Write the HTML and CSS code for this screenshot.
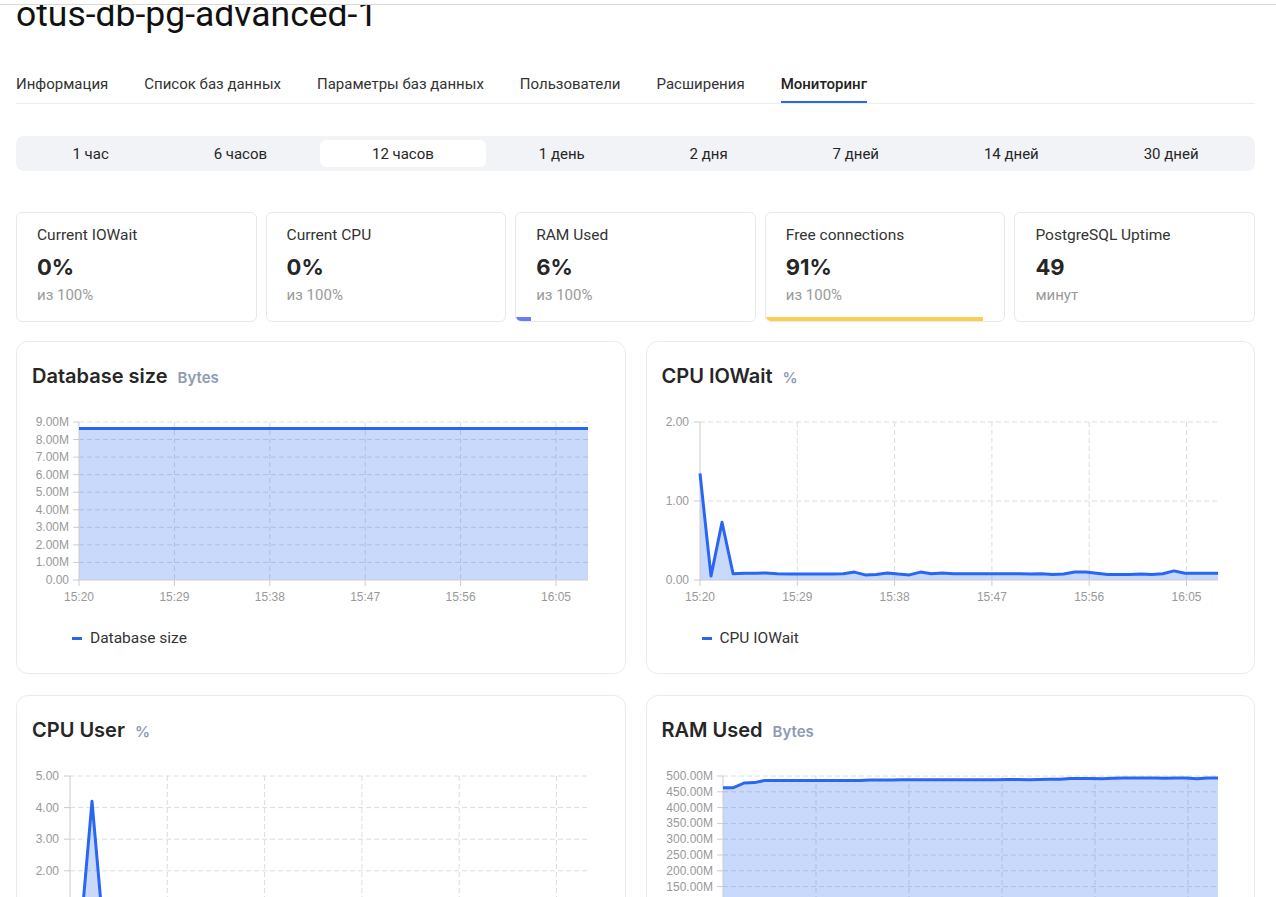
FILE: index.html
```html
<!DOCTYPE html>
<html lang="ru">
<head>
<meta charset="utf-8">
<title>otus-db-pg-advanced-1 — Мониторинг</title>
<link rel="stylesheet" href="styles.css">
</head>
<body>
<div class="topbar"></div>
<main class="page">
  <div class="title-clip"><h1 class="title">otus-db-pg-advanced-1</h1></div>

  <nav class="tabs">
    <span class="tab">Информация</span>
    <span class="tab">Список баз данных</span>
    <span class="tab">Параметры баз данных</span>
    <span class="tab">Пользователи</span>
    <span class="tab">Расширения</span>
    <span class="tab active">Мониторинг</span>
  </nav>

  <div class="seg">
    <span class="seg-item">1 час</span>
    <span class="seg-item">6 часов</span>
    <span class="seg-item active">12 часов</span>
    <span class="seg-item">1 день</span>
    <span class="seg-item">2 дня</span>
    <span class="seg-item">7 дней</span>
    <span class="seg-item">14 дней</span>
    <span class="seg-item">30 дней</span>
  </div>

  <section class="stats">
    <div class="stat">
      <div class="stat-body">
        <div class="stat-label">Current IOWait</div>
        <div class="stat-value">0%</div>
        <div class="stat-sub">из 100%</div>
      </div>
      <div class="stat-track"></div>
    </div>
    <div class="stat">
      <div class="stat-body">
        <div class="stat-label">Current CPU</div>
        <div class="stat-value">0%</div>
        <div class="stat-sub">из 100%</div>
      </div>
      <div class="stat-track"></div>
    </div>
    <div class="stat">
      <div class="stat-body">
        <div class="stat-label">RAM Used</div>
        <div class="stat-value">6%</div>
        <div class="stat-sub">из 100%</div>
      </div>
      <div class="stat-track"><div class="stat-bar bar-blue" style="width:6%"></div></div>
    </div>
    <div class="stat">
      <div class="stat-body">
        <div class="stat-label">Free connections</div>
        <div class="stat-value">91%</div>
        <div class="stat-sub">из 100%</div>
      </div>
      <div class="stat-track"><div class="stat-bar bar-yellow" style="width:91%"></div></div>
    </div>
    <div class="stat">
      <div class="stat-body">
        <div class="stat-label">PostgreSQL Uptime</div>
        <div class="stat-value">49</div>
        <div class="stat-sub">минут</div>
      </div>
      <div class="stat-track"></div>
    </div>
  </section>

  <section class="charts">
    <!-- Database size -->
    <div class="chart-card">
      <div class="chart-head"><span class="chart-title">Database size</span><span class="chart-unit">Bytes</span></div>
      <svg class="chart" width="577" height="210" viewBox="0 0 577 210">
        <g class="grid">
          <line x1="47" y1="21" x2="556" y2="21"/>
          <line x1="47" y1="38.56" x2="556" y2="38.56"/>
          <line x1="47" y1="56.11" x2="556" y2="56.11"/>
          <line x1="47" y1="73.67" x2="556" y2="73.67"/>
          <line x1="47" y1="91.22" x2="556" y2="91.22"/>
          <line x1="47" y1="108.78" x2="556" y2="108.78"/>
          <line x1="47" y1="126.33" x2="556" y2="126.33"/>
          <line x1="47" y1="143.89" x2="556" y2="143.89"/>
          <line x1="47" y1="161.44" x2="556" y2="161.44"/>
          <line x1="142.4" y1="21" x2="142.4" y2="179"/>
          <line x1="237.8" y1="21" x2="237.8" y2="179"/>
          <line x1="333.2" y1="21" x2="333.2" y2="179"/>
          <line x1="428.6" y1="21" x2="428.6" y2="179"/>
          <line x1="524" y1="21" x2="524" y2="179"/>
        </g>
        <path class="area" d="M47,27.4 L556,27.4 L556,179 L47,179 Z"/>
        <g class="axis">
          <line x1="47" y1="21" x2="47" y2="179"/>
          <line x1="47" y1="179" x2="556" y2="179"/>
          <line x1="41" y1="21" x2="47" y2="21"/><line x1="41" y1="38.56" x2="47" y2="38.56"/><line x1="41" y1="56.11" x2="47" y2="56.11"/><line x1="41" y1="73.67" x2="47" y2="73.67"/><line x1="41" y1="91.22" x2="47" y2="91.22"/><line x1="41" y1="108.78" x2="47" y2="108.78"/><line x1="41" y1="126.33" x2="47" y2="126.33"/><line x1="41" y1="143.89" x2="47" y2="143.89"/><line x1="41" y1="161.44" x2="47" y2="161.44"/><line x1="41" y1="179" x2="47" y2="179"/>
          <line x1="47" y1="179" x2="47" y2="185"/><line x1="142.4" y1="179" x2="142.4" y2="185"/><line x1="237.8" y1="179" x2="237.8" y2="185"/><line x1="333.2" y1="179" x2="333.2" y2="185"/><line x1="428.6" y1="179" x2="428.6" y2="185"/><line x1="524" y1="179" x2="524" y2="185"/>
        </g>
        <path class="line" d="M47,27.4 L556,27.4"/>
        <g class="ylab">
          <text x="37" y="25">9.00M</text><text x="37" y="42.6">8.00M</text><text x="37" y="60.1">7.00M</text><text x="37" y="77.7">6.00M</text><text x="37" y="95.2">5.00M</text><text x="37" y="112.8">4.00M</text><text x="37" y="130.3">3.00M</text><text x="37" y="147.9">2.00M</text><text x="37" y="165.4">1.00M</text><text x="37" y="183">0.00</text>
        </g>
        <g class="xlab">
          <text x="47" y="200">15:20</text><text x="142.4" y="200">15:29</text><text x="237.8" y="200">15:38</text><text x="333.2" y="200">15:47</text><text x="428.6" y="200">15:56</text><text x="524" y="200">16:05</text>
        </g>
      </svg>
      <div class="legend"><span class="legend-mark"></span>Database size</div>
    </div>

    <!-- CPU IOWait -->
    <div class="chart-card">
      <div class="chart-head"><span class="chart-title">CPU IOWait</span><span class="chart-unit">%</span></div>
      <svg class="chart" width="577" height="210" viewBox="0 0 577 210">
        <g class="grid">
          <line x1="38" y1="21" x2="556" y2="21"/>
          <line x1="38" y1="100" x2="556" y2="100"/>
          <line x1="135.3" y1="21" x2="135.3" y2="179"/>
          <line x1="232.6" y1="21" x2="232.6" y2="179"/>
          <line x1="329.9" y1="21" x2="329.9" y2="179"/>
          <line x1="427.2" y1="21" x2="427.2" y2="179"/>
          <line x1="524.5" y1="21" x2="524.5" y2="179"/>
        </g>
        <path class="area" d="M38,72.4 L49,175.1 L60,121.3 L71.1,172.7 L82.1,172.3 L93.1,172.3 L104.1,171.9 L115.1,172.7 L126.2,173.1 L137.2,173.1 L148.2,173.1 L159.2,173.1 L170.2,173.1 L181.3,172.7 L192.3,171.1 L203.3,173.9 L214.3,173.5 L225.3,171.9 L236.4,173.1 L247.4,173.9 L258.4,171.1 L269.4,172.7 L280.4,171.9 L291.5,172.7 L302.5,172.7 L313.5,172.7 L324.5,172.7 L335.5,172.7 L346.6,172.7 L357.6,172.7 L368.6,173.1 L379.6,172.7 L390.6,173.5 L401.7,173.1 L412.7,171.1 L423.7,171.1 L434.7,172.3 L445.7,173.5 L456.8,173.5 L467.8,173.5 L478.8,173.1 L489.8,173.5 L500.8,172.7 L511.9,169.9 L522.9,172.3 L533.9,172.3 L544.9,172.3 L556,172.3 L556,179 L38,179 Z"/>
        <g class="axis">
          <line x1="38" y1="21" x2="38" y2="179"/>
          <line x1="38" y1="179" x2="556" y2="179"/>
          <line x1="32" y1="21" x2="38" y2="21"/><line x1="32" y1="100" x2="38" y2="100"/><line x1="32" y1="179" x2="38" y2="179"/>
          <line x1="38" y1="179" x2="38" y2="185"/><line x1="135.3" y1="179" x2="135.3" y2="185"/><line x1="232.6" y1="179" x2="232.6" y2="185"/><line x1="329.9" y1="179" x2="329.9" y2="185"/><line x1="427.2" y1="179" x2="427.2" y2="185"/><line x1="524.5" y1="179" x2="524.5" y2="185"/>
        </g>
        <path class="line" d="M38,72.4 L49,175.1 L60,121.3 L71.1,172.7 L82.1,172.3 L93.1,172.3 L104.1,171.9 L115.1,172.7 L126.2,173.1 L137.2,173.1 L148.2,173.1 L159.2,173.1 L170.2,173.1 L181.3,172.7 L192.3,171.1 L203.3,173.9 L214.3,173.5 L225.3,171.9 L236.4,173.1 L247.4,173.9 L258.4,171.1 L269.4,172.7 L280.4,171.9 L291.5,172.7 L302.5,172.7 L313.5,172.7 L324.5,172.7 L335.5,172.7 L346.6,172.7 L357.6,172.7 L368.6,173.1 L379.6,172.7 L390.6,173.5 L401.7,173.1 L412.7,171.1 L423.7,171.1 L434.7,172.3 L445.7,173.5 L456.8,173.5 L467.8,173.5 L478.8,173.1 L489.8,173.5 L500.8,172.7 L511.9,169.9 L522.9,172.3 L533.9,172.3 L544.9,172.3 L556,172.3"/>
        <g class="ylab">
          <text x="27" y="25">2.00</text><text x="27" y="104">1.00</text><text x="27" y="183">0.00</text>
        </g>
        <g class="xlab">
          <text x="38" y="200">15:20</text><text x="135.3" y="200">15:29</text><text x="232.6" y="200">15:38</text><text x="329.9" y="200">15:47</text><text x="427.2" y="200">15:56</text><text x="524.5" y="200">16:05</text>
        </g>
      </svg>
      <div class="legend"><span class="legend-mark"></span>CPU IOWait</div>
    </div>

    <!-- CPU User -->
    <div class="chart-card">
      <div class="chart-head"><span class="chart-title">CPU User</span><span class="chart-unit">%</span></div>
      <svg class="chart" width="577" height="210" viewBox="0 0 577 210">
        <g class="grid">
          <line x1="38" y1="21" x2="556" y2="21"/>
          <line x1="38" y1="52.6" x2="556" y2="52.6"/>
          <line x1="38" y1="84.2" x2="556" y2="84.2"/>
          <line x1="38" y1="115.8" x2="556" y2="115.8"/>
          <line x1="38" y1="147.4" x2="556" y2="147.4"/>
          <line x1="135.3" y1="21" x2="135.3" y2="179"/>
          <line x1="232.6" y1="21" x2="232.6" y2="179"/>
          <line x1="329.9" y1="21" x2="329.9" y2="179"/>
          <line x1="427.2" y1="21" x2="427.2" y2="179"/>
          <line x1="524.5" y1="21" x2="524.5" y2="179"/>
        </g>
        <path class="area" d="M38,163.2 L49,172.7 L60,46.3 L71.1,172.7 L82.1,169.5 L556,169.5 L556,179 L38,179 Z"/>
        <g class="axis">
          <line x1="38" y1="21" x2="38" y2="179"/>
          <line x1="38" y1="179" x2="556" y2="179"/>
          <line x1="32" y1="21" x2="38" y2="21"/><line x1="32" y1="52.6" x2="38" y2="52.6"/><line x1="32" y1="84.2" x2="38" y2="84.2"/><line x1="32" y1="115.8" x2="38" y2="115.8"/><line x1="32" y1="147.4" x2="38" y2="147.4"/><line x1="32" y1="179" x2="38" y2="179"/>
        </g>
        <path class="line" d="M38,163.2 L49,172.7 L60,46.3 L71.1,172.7 L82.1,169.5 L556,169.5"/>
        <g class="ylab">
          <text x="27" y="25">5.00</text><text x="27" y="56.6">4.00</text><text x="27" y="88.2">3.00</text><text x="27" y="119.8">2.00</text><text x="27" y="151.4">1.00</text><text x="27" y="183">0.00</text>
        </g>
      </svg>
      <div class="legend"><span class="legend-mark"></span>CPU User</div>
    </div>

    <!-- RAM Used -->
    <div class="chart-card">
      <div class="chart-head"><span class="chart-title">RAM Used</span><span class="chart-unit">Bytes</span></div>
      <svg class="chart" width="577" height="210" viewBox="0 0 577 210">
        <g class="grid">
          <line x1="61" y1="21" x2="556" y2="21"/>
          <line x1="61" y1="36.8" x2="556" y2="36.8"/>
          <line x1="61" y1="52.6" x2="556" y2="52.6"/>
          <line x1="61" y1="68.4" x2="556" y2="68.4"/>
          <line x1="61" y1="84.2" x2="556" y2="84.2"/>
          <line x1="61" y1="100" x2="556" y2="100"/>
          <line x1="61" y1="115.8" x2="556" y2="115.8"/>
          <line x1="61" y1="131.6" x2="556" y2="131.6"/>
          <line x1="61" y1="147.4" x2="556" y2="147.4"/>
          <line x1="61" y1="163.2" x2="556" y2="163.2"/>
          <line x1="154" y1="21" x2="154" y2="179"/>
          <line x1="247" y1="21" x2="247" y2="179"/>
          <line x1="340" y1="21" x2="340" y2="179"/>
          <line x1="433" y1="21" x2="433" y2="179"/>
          <line x1="526" y1="21" x2="526" y2="179"/>
        </g>
        <path class="area" d="M61,32.7 L71.5,32.7 L82.1,28 L92.6,27.6 L103.1,25.4 L113.7,25.4 L124.2,25.4 L134.7,25.4 L145.2,25.4 L155.8,25.4 L166.3,25.4 L176.8,25.6 L187.4,25.6 L197.9,25.4 L208.4,25.1 L219,25.1 L229.5,25.1 L240,24.8 L250.5,24.8 L261.1,24.8 L271.6,24.8 L282.1,24.8 L292.7,24.8 L303.2,24.8 L313.7,24.8 L324.3,24.8 L334.8,24.8 L345.3,24.5 L355.8,24.5 L366.4,24.8 L376.9,24.5 L387.4,24.2 L398,24.2 L408.5,23.5 L419,23.5 L429.6,23.5 L440.1,23.8 L450.6,23.2 L461.1,22.9 L471.7,22.9 L482.2,22.9 L492.7,22.9 L503.3,23.2 L513.8,22.9 L524.3,22.9 L534.9,23.8 L545.4,22.9 L556,22.9 L556,179 L61,179 Z"/>
        <g class="axis">
          <line x1="61" y1="21" x2="61" y2="179"/>
          <line x1="55" y1="21" x2="61" y2="21"/><line x1="55" y1="36.8" x2="61" y2="36.8"/><line x1="55" y1="52.6" x2="61" y2="52.6"/><line x1="55" y1="68.4" x2="61" y2="68.4"/><line x1="55" y1="84.2" x2="61" y2="84.2"/><line x1="55" y1="100" x2="61" y2="100"/><line x1="55" y1="115.8" x2="61" y2="115.8"/><line x1="55" y1="131.6" x2="61" y2="131.6"/><line x1="55" y1="147.4" x2="61" y2="147.4"/><line x1="55" y1="163.2" x2="61" y2="163.2"/><line x1="55" y1="179" x2="61" y2="179"/>
          <line x1="61" y1="179" x2="556" y2="179"/>
        </g>
        <path class="line" d="M61,32.7 L71.5,32.7 L82.1,28 L92.6,27.6 L103.1,25.4 L113.7,25.4 L124.2,25.4 L134.7,25.4 L145.2,25.4 L155.8,25.4 L166.3,25.4 L176.8,25.6 L187.4,25.6 L197.9,25.4 L208.4,25.1 L219,25.1 L229.5,25.1 L240,24.8 L250.5,24.8 L261.1,24.8 L271.6,24.8 L282.1,24.8 L292.7,24.8 L303.2,24.8 L313.7,24.8 L324.3,24.8 L334.8,24.8 L345.3,24.5 L355.8,24.5 L366.4,24.8 L376.9,24.5 L387.4,24.2 L398,24.2 L408.5,23.5 L419,23.5 L429.6,23.5 L440.1,23.8 L450.6,23.2 L461.1,22.9 L471.7,22.9 L482.2,22.9 L492.7,22.9 L503.3,23.2 L513.8,22.9 L524.3,22.9 L534.9,23.8 L545.4,22.9 L556,22.9"/>
        <g class="ylab">
          <text x="51" y="25">500.00M</text><text x="51" y="40.8">450.00M</text><text x="51" y="56.6">400.00M</text><text x="51" y="72.4">350.00M</text><text x="51" y="88.2">300.00M</text><text x="51" y="104">250.00M</text><text x="51" y="119.8">200.00M</text><text x="51" y="135.6">150.00M</text><text x="51" y="151.4">100.00M</text><text x="51" y="167.2">50.00M</text><text x="51" y="183">0.00</text>
        </g>
      </svg>
      <div class="legend"><span class="legend-mark"></span>RAM Used</div>
    </div>
  </section>
</main>
</body>
</html>
```

FILE: styles.css
```css
* { box-sizing: border-box; }

html, body {
  margin: 0;
  background: #ffffff;
  color: #262626;
  font-family: Inter, "Noto Sans", sans-serif;
}

.topbar {
  height: 5px;
  border-bottom: 1px solid #d9d9d9;
  background: #ffffff;
}

.page {
  padding: 0 21px 0 16px;
}

.title-clip {
  height: 29px;
  overflow: hidden;
}

.title {
  margin: -11px 0 0;
  font-family: Roboto, "Liberation Sans", sans-serif;
  font-weight: 400;
  font-size: 35.5px;
  line-height: 40px;
  color: #111111;
  white-space: nowrap;
}

.tabs {
  margin-top: 40px;
  display: flex;
  gap: 36px;
  border-bottom: 1px solid #eceef1;
}

.tab {
  font-family: Roboto, "Liberation Sans", sans-serif;
  font-size: 15px;
  line-height: 20px;
  color: #333;
  padding-bottom: 7px;
  border-bottom: 2px solid transparent;
}

.tab.active {
  font-weight: 500;
  color: #222;
  border-bottom-color: #2867f5;
}

.seg {
  margin-top: 32px;
  display: flex;
  padding: 4px;
  background: #f2f3f6;
  border-radius: 8px;
}

.seg-item {
  flex: 1 1 auto;
  text-align: center;
  font-family: Roboto, "Liberation Sans", sans-serif;
  font-size: 15px;
  line-height: 26px;
  padding-top: 1px;
  color: #262626;
  border-radius: 6px;
}

.seg-item.active {
  background: #ffffff;
}

.stats {
  margin-top: 41px;
  display: grid;
  grid-template-columns: repeat(5, 1fr);
  gap: 9px;
}

.stat {
  height: 110px;
  border: 1px solid #e6e8ec;
  border-radius: 6px;
  overflow: hidden;
  display: flex;
  flex-direction: column;
}

.stat-body {
  flex: 1;
  padding: 12px 20px 0;
}

.stat-label {
  font-family: Roboto, "Liberation Sans", sans-serif;
  font-size: 15.5px;
  line-height: 20px;
  color: #333;
}

.stat-value {
  margin-top: 8px;
  font-size: 22px;
  font-weight: 700;
  line-height: 28px;
  color: #262626;
}

.stat-sub {
  margin-top: 4px;
  font-family: Roboto, "Liberation Sans", sans-serif;
  font-size: 15px;
  line-height: 20px;
  color: #9a9a9a;
}

.stat-track {
  height: 4px;
}

.stat-bar {
  height: 4px;
}

.bar-blue { background: #6b7cf2; }
.bar-yellow { background: #fbcd50; }

.charts {
  margin-top: 19px;
  display: grid;
  grid-template-columns: 1fr 1fr;
  gap: 21px 20px;
}

.chart-card {
  border: 1px solid #e8ecf2;
  border-radius: 12px;
  padding: 21px 15px 25px;
}

.chart-head {
  display: flex;
  align-items: baseline;
  gap: 10px;
  line-height: 26px;
}

.chart-title {
  font-size: 20px;
  font-weight: 600;
  color: #262626;
}

.chart-unit {
  font-size: 15px;
  font-weight: 600;
  color: #8d9bb3;
}

.chart {
  display: block;
  margin-top: 10px;
  overflow: visible;
}

.grid line {
  stroke: #dcdcdc;
  stroke-width: 1;
  stroke-dasharray: 5 3;
}

.axis line {
  stroke: #cccccc;
  stroke-width: 1;
}

.area {
  fill: #2867f5;
  fill-opacity: 0.25;
  stroke: none;
}

.line {
  fill: none;
  stroke: #2867f5;
  stroke-width: 3;
  stroke-linejoin: round;
}

.ylab text, .xlab text {
  font-family: "Liberation Sans", Arial, sans-serif;
  font-size: 12px;
  fill: #999999;
}

.ylab text { text-anchor: end; }
.xlab text { text-anchor: middle; }

.legend {
  margin-top: 17px;
  padding-left: 40px;
  display: flex;
  align-items: center;
  gap: 8px;
  font-family: Roboto, "Liberation Sans", sans-serif;
  font-size: 15.5px;
  line-height: 20px;
  color: #333;
}

.legend-mark {
  width: 10px;
  height: 3px;
  background: #2867f5;
}
```
